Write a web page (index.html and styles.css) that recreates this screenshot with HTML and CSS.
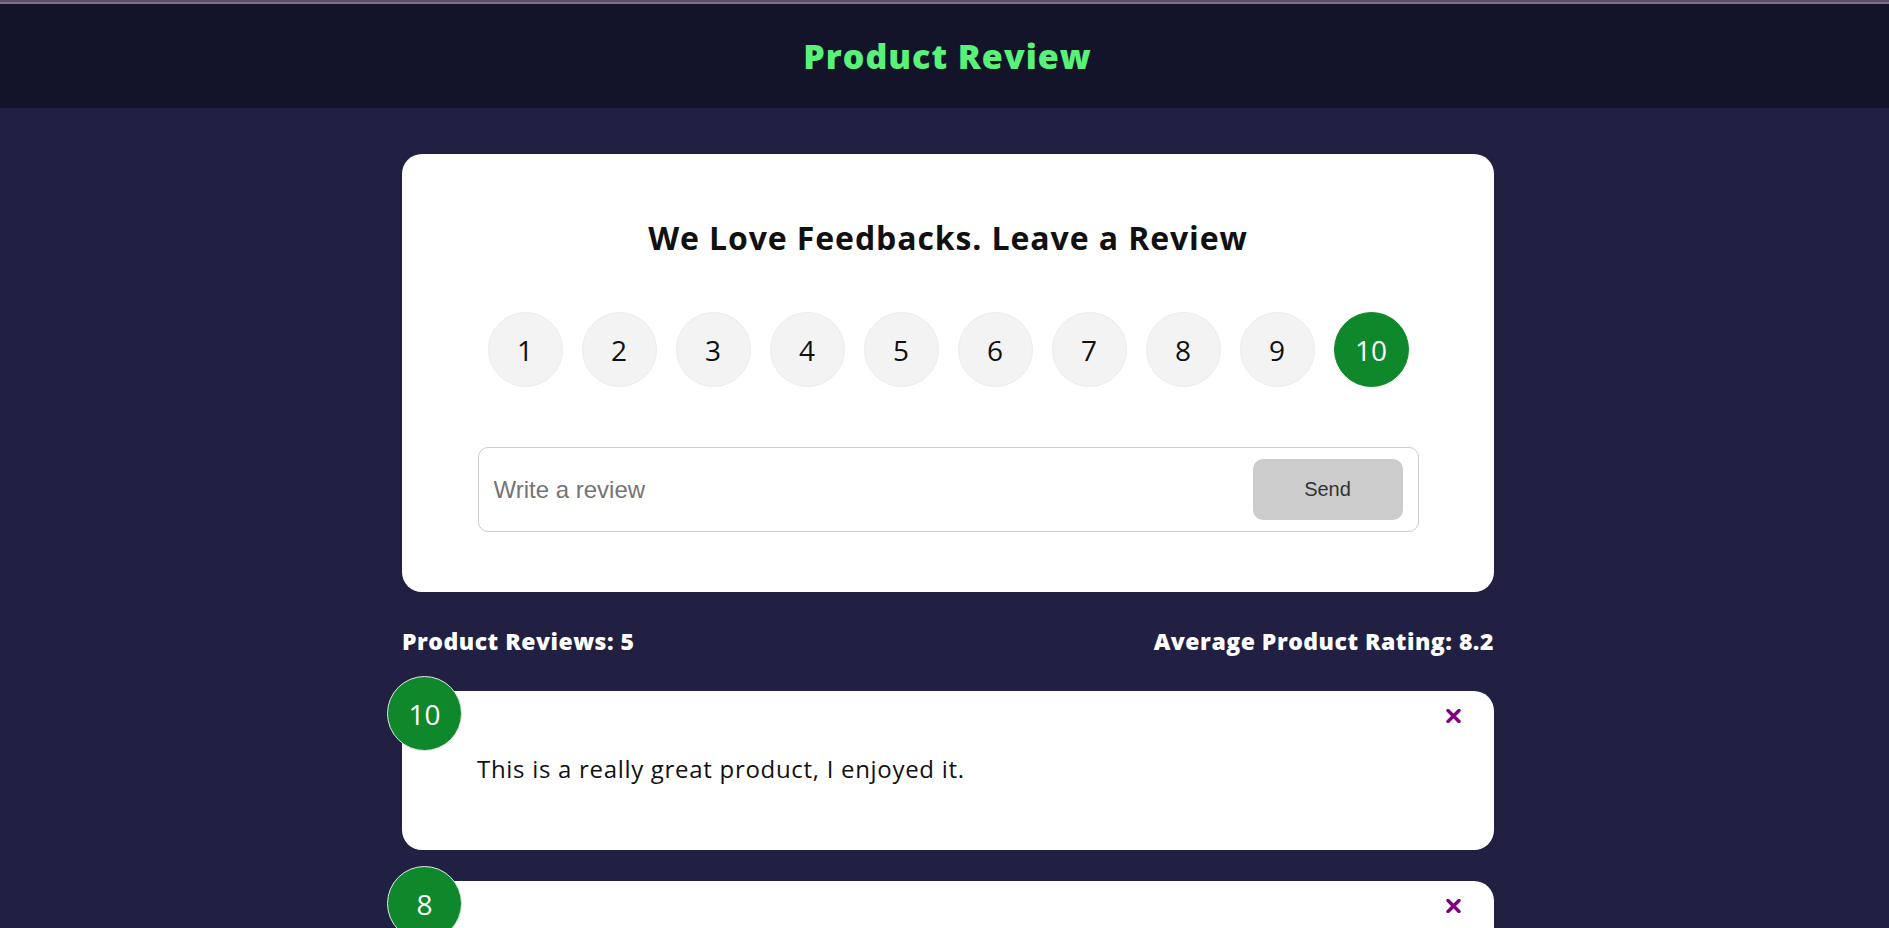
FILE: index.html
```html
<!DOCTYPE html>
<html lang="en">
<head>
<meta charset="utf-8">
<title>Product Review</title>
<link rel="stylesheet" href="styles.css">
</head>
<body>
<div class="topline"></div>
<header class="header">
  <h1 class="brand">Product Review</h1>
</header>
<main class="main">
  <section class="card">
    <h2 class="card-title">We Love Feedbacks. Leave a Review</h2>
    <ul class="ratings">
      <li class="rating">1</li>
      <li class="rating">2</li>
      <li class="rating">3</li>
      <li class="rating">4</li>
      <li class="rating">5</li>
      <li class="rating">6</li>
      <li class="rating">7</li>
      <li class="rating">8</li>
      <li class="rating">9</li>
      <li class="rating active">10</li>
    </ul>
    <form class="input-group">
      <input class="review-input" type="text" placeholder="Write a review">
      <button class="send-btn" type="button">Send</button>
    </form>
  </section>

  <div class="stats">
    <h4 class="stat">Product Reviews: 5</h4>
    <h4 class="stat">Average Product Rating: 8.2</h4>
  </div>

  <div class="review">
    <div class="review-num">10</div>
    <button class="close" type="button" aria-label="Delete">
      <svg width="15" height="14" viewBox="0 0 15 14"><path d="M2 1.5 L13 12.5 M13 1.5 L2 12.5" stroke="#800080" stroke-width="3.4" stroke-linecap="round" fill="none"/></svg>
    </button>
    <p class="review-text">This is a really great product, I enjoyed it.</p>
  </div>

  <div class="review">
    <div class="review-num">8</div>
    <button class="close" type="button" aria-label="Delete">
      <svg width="15" height="14" viewBox="0 0 15 14"><path d="M2 1.5 L13 12.5 M13 1.5 L2 12.5" stroke="#800080" stroke-width="3.4" stroke-linecap="round" fill="none"/></svg>
    </button>
  </div>
</main>
</body>
</html>
```

FILE: styles.css
```css
* {
  box-sizing: border-box;
}

body {
  margin: 0;
  background: #212043;
  font-family: "Open Sans", "Noto Sans", sans-serif;
  color: #000;
}

.topline {
  height: 4px;
  background: linear-gradient(#5a4e68 0 2px, #7d718c 2px 4px);
}

.header {
  height: 104px;
  background: #13142a;
  display: flex;
  align-items: center;
  justify-content: center;
  padding-left: 6px;
}

.brand {
  margin: 0;
  color: #5af17a;
  font-size: 34px;
  font-weight: 800;
  line-height: 48px;
  letter-spacing: 1px;
}

.main {
  width: 1092px;
  margin: 46px 0 0 calc(50% - 542.5px);
}

.card {
  background: #fff;
  border-radius: 20px;
  padding: 60px 0 60px;
  text-align: center;
}

.card-title {
  margin: 0;
  font-size: 32px;
  font-weight: 700;
  line-height: 48px;
  color: #111;
  letter-spacing: 0.9px;
}

.ratings {
  display: flex;
  justify-content: center;
  gap: 19px;
  list-style: none;
  padding: 0;
  margin: 50px 0 0;
}

.rating {
  width: 75px;
  height: 75px;
  border-radius: 50%;
  background: #f3f3f3;
  border: 1px solid #ececec;
  display: flex;
  align-items: center;
  justify-content: center;
  font-size: 28px;
  color: #111;
}

.rating.active {
  background: #0e882b;
  border-color: #0e882b;
  color: #fff;
}

.input-group {
  width: 941px;
  height: 85px;
  margin: 60px auto 0;
  border: 1px solid #ccc;
  border-radius: 10px;
  display: flex;
  align-items: center;
  padding: 0 15px;
}

.review-input {
  flex: 1;
  border: none;
  outline: none;
  font-family: "Liberation Sans", Arial, sans-serif;
  font-size: 24px;
  color: #333;
  padding: 0;
  background: transparent;
}

.review-input::placeholder {
  color: #757575;
}

.send-btn {
  width: 150px;
  height: 61px;
  border: none;
  border-radius: 10px;
  background: #ccc;
  color: #333;
  font-family: "Liberation Sans", Arial, sans-serif;
  font-size: 20px;
}

.stats {
  display: flex;
  justify-content: space-between;
  margin-top: 33px;
}

.stat {
  margin: 0;
  color: #fff;
  font-size: 23px;
  font-weight: 800;
  line-height: 33px;
  letter-spacing: 0.5px;
}

.review {
  position: relative;
  margin-top: 33px;
  height: 159px;
  background: #fff;
  border-radius: 20px;
  padding: 60px 75px 0;
}

.review + .review {
  margin-top: 31px;
}

.review-num {
  position: absolute;
  top: -15px;
  left: -15px;
  width: 75px;
  height: 75px;
  border-radius: 50%;
  background: #0e882b;
  border: 1px solid #e6e6e6;
  color: #fff;
  font-size: 28px;
  display: flex;
  align-items: center;
  justify-content: center;
}

.close {
  position: absolute;
  top: 18px;
  right: 33px;
  padding: 0;
  border: none;
  background: none;
  width: 15px;
  height: 14px;
  display: flex;
}

.review-text {
  margin: 0;
  font-size: 24px;
  line-height: 36px;
  color: #111;
  letter-spacing: 0.7px;
}
```
